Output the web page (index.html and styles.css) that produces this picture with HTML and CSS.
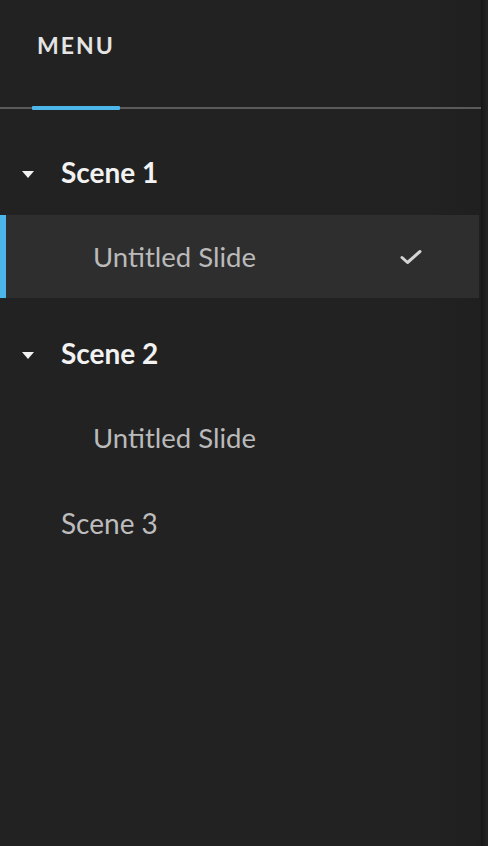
FILE: index.html
```html
<!DOCTYPE html>
<html lang="en">
<head>
<meta charset="utf-8">
<title>Menu</title>
<link rel="stylesheet" href="styles.css">
</head>
<body>
<div class="app">
  <aside class="panel">
    <header class="tabs">
      <div class="tab tab-active">MENU</div>
    </header>
    <nav class="tree">
      <div class="group">
        <div class="row scene open"><span class="caret"></span><span class="label">Scene 1</span></div>
        <div class="row slide selected"><span class="label">Untitled Slide</span>
          <svg class="check" width="24" height="18" viewBox="0 0 24 18"><polyline points="3,9.5 8.5,14.5 21,3.5" fill="none" stroke="#d4d4d4" stroke-width="3" stroke-linecap="round" stroke-linejoin="round"/></svg>
        </div>
      </div>
      <div class="group">
        <div class="row scene open"><span class="caret"></span><span class="label">Scene 2</span></div>
        <div class="row slide"><span class="label">Untitled Slide</span></div>
      </div>
      <div class="row scene closed"><span class="label">Scene 3</span></div>
    </nav>
  </aside>
  <div class="edge"></div>
</div>
</body>
</html>
```

FILE: styles.css
```css
html, body {
  margin: 0;
  padding: 0;
  height: 100%;
  background: #212121;
  font-family: "Lato", "Noto Sans", sans-serif;
}

.app {
  display: flex;
  height: 846px;
}

.panel {
  flex: 1;
  background: linear-gradient(to right, #222222 0, #222222 88%, #1f1f1f 100%);
}

.edge {
  width: 7px;
  background: linear-gradient(to right, #161616 0, #1d1d1d 40%, #242424 100%);
}

.tabs {
  height: 107px;
  border-bottom: 2px solid #5a5a5a;
  padding-left: 32px;
  display: flex;
  align-items: flex-end;
}

.tab {
  width: 88px;
  height: 107px;
  box-sizing: border-box;
  padding-top: 32px;
  text-align: center;
  color: #e4e4e4;
  font-weight: 700;
  font-size: 23px;
  letter-spacing: 2px;
  line-height: 26px;
  position: relative;
}

.tab-active::after {
  content: "";
  position: absolute;
  left: 0;
  right: 0;
  bottom: -3px;
  height: 4px;
  background: #4cb5ea;
  border-radius: 1px;
}

.tree {
  padding-top: 20px;
}

.group:first-child {
  margin-bottom: 12px;
}

.row {
  height: 85px;
  display: flex;
  align-items: center;
  box-sizing: border-box;
}

.scene {
  font-size: 28px;
  padding-left: 61px;
}

.scene.open {
  padding-left: 22px;
  color: #f2f2f2;
  font-weight: 700;
}

.scene.closed {
  color: #bdbdbd;
  font-weight: 400;
}

.caret {
  width: 0;
  height: 0;
  border-left: 6px solid transparent;
  border-right: 6px solid transparent;
  border-top: 7px solid #f2f2f2;
  margin-top: 5px;
  margin-right: 27px;
}

.slide {
  font-size: 27.5px;
  color: #bababa;
  padding-left: 93px;
  padding-right: 56px;
  justify-content: space-between;
  margin-right: 2px;
}

.slide.selected {
  background: #2e2e2e;
  box-shadow: inset 6px 0 0 #4cb5ea;
  height: 83px;
  margin-top: 1px;
  margin-bottom: 1px;
}

.check {
  display: block;
}
```
